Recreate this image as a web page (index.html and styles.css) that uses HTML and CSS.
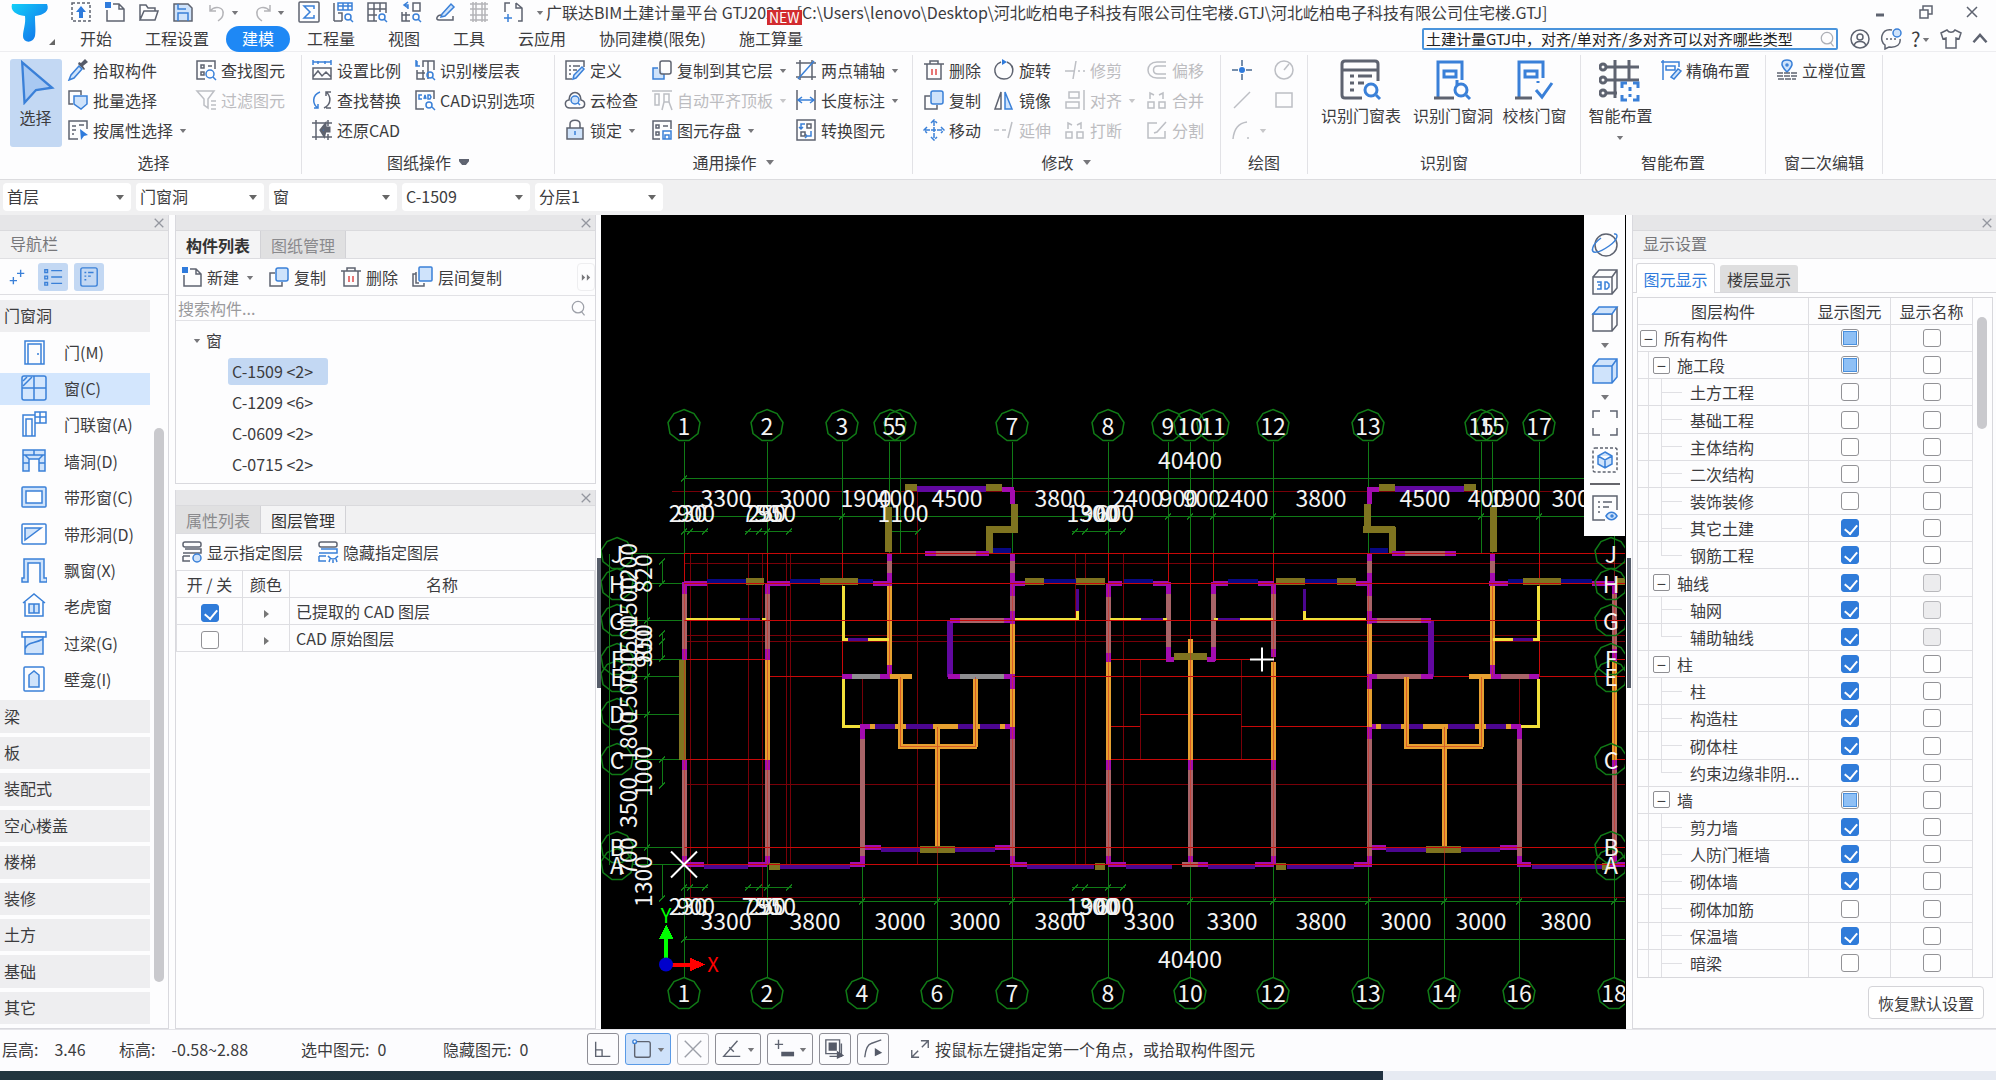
FILE: index.html
```html
<!DOCTYPE html>
<html lang="zh-CN">
<head>
<meta charset="utf-8">
<title>广联达BIM土建计量平台 GTJ2021</title>
<link rel="stylesheet" href="styles.css">
</head>
<body>
<svg class="sprite" aria-hidden="true">
  <defs>
    <linearGradient id="logo-fill" x1="0" y1="0" x2="1" y2="1"><stop offset="0" stop-color="#12d0f8"/><stop offset=".6" stop-color="#1390f0"/><stop offset="1" stop-color="#0d6ae8"/></linearGradient>
    <symbol id="up" viewBox="0 0 22 22"><rect class="g" x="2" y="2" width="18" height="18" stroke-dasharray="3 2"/><path class="bf" d="M11 5l5 6h-3v6H9v-6H6z"/></symbol>
    <symbol id="new" viewBox="0 0 22 22"><path class="g" d="M9 3h6l5 5v12H3V9M15 3v5h5"/><path class="bf" d="M1 1h6v6H1z"/></symbol>
    <symbol id="open" viewBox="0 0 22 22"><path class="g" d="M2 19V4h6l2 3h7v3M2 19l4-9h14l-3 9z"/></symbol>
    <symbol id="save" viewBox="0 0 22 22"><path class="g lf" d="M2 3h14l4 4v13H2z"/><path class="b" d="M6 20v-8h10v8M6 3v5h8"/></symbol>
    <symbol id="undo" viewBox="0 0 22 22"><path class="d" d="M4 4v6h6M4 10c5-6 14-4 13 3 0 3-2 5-5 7"/></symbol>
    <symbol id="redo" viewBox="0 0 22 22"><path class="d" d="M18 4v6h-6M18 10c-5-6-14-4-13 3 0 3 2 5 5 7"/></symbol>
    <symbol id="sigma" viewBox="0 0 22 22"><rect class="g" x="1" y="1" width="20" height="20" rx="1"/><path class="b" d="M16 8V5H6l6 6-6 6h10v-3"/></symbol>
    <symbol id="tabfind" viewBox="0 0 22 22"><path class="g" d="M2 2v18M2 20h8M6 12h4v8"/><path class="b" d="M6 2h14v7H6zM6 5h14M11 2v7M16 2v7"/><circle class="b" cx="16" cy="16" r="3"/><path class="b" d="M18 18l3 3"/></symbol>
    <symbol id="gridfind" viewBox="0 0 22 22"><path class="g" d="M11 20H2V2h18v10M2 8h18M2 14h9M8 2v18M14 2v9"/><circle class="b" cx="16" cy="16" r="3"/><path class="b" d="M18 18l3 3"/></symbol>
    <symbol id="swapfind" viewBox="0 0 22 22"><path class="b" d="M8 1L4 4l4 3M4 4h4v4"/><path class="g" d="M13 2h7v8h-7zM2 11v9h8M6 11v9M2 14h8"/><circle class="b" cx="16" cy="16" r="3"/><path class="b" d="M18 18l3 3"/></symbol>
    <symbol id="brush" viewBox="0 0 22 22"><path class="b lf" d="M8 13L17 3l3 3-9 9-4 1z"/><path class="g" d="M7 14c-4 0-6 5-2 5h14v-4"/></symbol>
    <symbol id="film" viewBox="0 0 22 22"><path class="d" d="M5 1v20M17 1v20M8 1v20M14 1v20M2 3h18M2 8h18M2 14h18M2 19h18"/></symbol>
    <symbol id="pageadd" viewBox="0 0 22 22"><path class="g" d="M3 11V2h5M14 2l6 5v13h-4M14 2v5h6"/><path class="b" d="M6 13v8M2 17h8"/></symbol>
    <symbol id="pick" viewBox="0 0 22 22"><path class="gf" d="M11 5l6 6 1-1-2-3 5-4-3-3-4 4-2-1z"/><path class="b lf" d="M12 7l-8 9-2 5 5-2 8-9z"/></symbol>
    <symbol id="batch" viewBox="0 0 22 22"><path class="g" d="M6 15H2V2h12v4"/><path class="b lf" d="M7 7h13v8l-6 5-7-5z"/></symbol>
    <symbol id="byattr" viewBox="0 0 22 22"><path class="g" d="M11 20H2V2h18v8M5 7h4M5 11h4M5 15h2M12 6h5"/><path class="bf" d="M13 10l8 6-4 1-3 4z"/></symbol>
    <symbol id="find" viewBox="0 0 22 22"><path class="g" d="M10 20H2V2h18v8M6 6h3v3H6zM6 13h3v3H6zM13 7h4"/><circle class="b" cx="15" cy="15" r="4"/><path class="b" d="M18 18l3 3"/></symbol>
    <symbol id="filter" viewBox="0 0 22 22"><path class="g" d="M2 2h17l-6 8v9l-4-3v-6zM16 12h5M16 16h5M16 20h5"/></symbol>
    <symbol id="scale" viewBox="0 0 22 22"><path class="b" d="M2 1v5M20 1v5M2 3h18M7 2v3M14 2v3"/><path class="g" d="M2 9h18v11H2zM2 18l5-6 4 5 4-4 5 5"/></symbol>
    <symbol id="replace" viewBox="0 0 22 22"><path class="b" d="M9 3C1 6 1 15 7 19M7 15v4H3"/><path class="g" d="M13 19c8-4 7-12 2-16M20 3h-5v4M15 19h5"/></symbol>
    <symbol id="restore" viewBox="0 0 22 22"><path class="g" d="M5 1v20M1 4h20M17 1v6M1 18h20M17 15v6"/><path class="bf" d="M13 16l-3-5 4-5v3h4v3h-4z"/></symbol>
    <symbol id="floor" viewBox="0 0 22 22"><path class="b" d="M2 1v6h4M3 2v5"/><path class="g" d="M9 8V2h11v9M14 2v18M3 11v9h8M9 11v9M3 14h8"/><circle class="b" cx="16" cy="16" r="3"/><path class="b" d="M18 18l3 3"/></symbol>
    <symbol id="cad" viewBox="0 0 22 22"><path class="g" d="M10 20H2V2h18v8"/><path class="b" d="M8 6H5v4h3M10 10l1-4 1 4M14 6h2l1 2-1 2h-2z"/><circle class="b" cx="15" cy="16" r="3"/><path class="b" d="M18 18l3 3"/></symbol>
    <symbol id="define" viewBox="0 0 22 22"><path class="g" d="M8 20H2V2h18v6M5 7h2M9 7h7M5 11h2M9 11h4M5 15h2"/><path class="b lf" d="M10 16l8-8 2 2-8 9-3 1z"/></symbol>
    <symbol id="cloud" viewBox="0 0 22 22"><path class="g" d="M6 19c-6 0-6-8-1-8C5 1 17 1 17 11c5 1 5 8-1 8z"/><circle class="b lf" cx="11" cy="11" r="4"/><path class="b" d="M14 14l2 2"/></symbol>
    <symbol id="lock" viewBox="0 0 22 22"><path class="g" d="M6 9V5c0-5 10-5 10 0v4"/><path class="g lf" d="M3 9h16v11H3z"/><path class="b" d="M11 12v4"/></symbol>
    <symbol id="copyfloor" viewBox="0 0 22 22"><path class="b lf" d="M7 9H2v11h11v-5"/><rect class="g" x="9" y="2" width="11" height="13" rx="2"/></symbol>
    <symbol id="autotop" viewBox="0 0 22 22"><path class="g" d="M1 2h20M4 5h4v11H4zM13 5h5v8h-5zM13 13l-2 8M18 13l3 8"/></symbol>
    <symbol id="store" viewBox="0 0 22 22"><path class="g" d="M9 20H2V2h18v8M5 6h3v3H5zM12 7h5M5 13h3v3H5z"/><path class="b" d="M12 12h8v8h-8zM14 20v-4h4v4"/></symbol>
    <symbol id="axis2" viewBox="0 0 22 22"><path class="g" d="M5 1v20M17 1v20M1 4h20M1 18h20"/><path class="b" d="M3 20L19 2"/></symbol>
    <symbol id="dim" viewBox="0 0 22 22"><path class="g" d="M2 1v20M20 1v20"/><path class="b" d="M3 11h16M7 8l-4 3 4 3M15 8l4 3-4 3"/></symbol>
    <symbol id="convert" viewBox="0 0 22 22"><rect class="g" x="2" y="1" width="18" height="20"/><path class="b" d="M10 5H6v5M16 12v5h-4M8 8l-2 2-2-2M10 15l2 2-2 2"/><path class="g" d="M12 5h4v4h-4zM6 13h4v4H6z"/></symbol>
    <symbol id="del" viewBox="0 0 22 22"><path class="g" d="M1 5h20M7 5V2h8v3M4 5v15h14V5"/><path class="r" d="M9 10v6M13 10v6"/></symbol>
    <symbol id="copy" viewBox="0 0 22 22"><path class="g" d="M7 7H2v13h12v-4"/><rect class="b lf" x="8" y="2" width="12" height="13" rx="2"/></symbol>
    <symbol id="move" viewBox="0 0 22 22"><path class="b" d="M11 2v18M2 11h18M8 4l3-3 3 3M8 18l3 3 3-3M4 8l-3 3 3 3M18 8l3 3-3 3" stroke-dasharray="5 1"/></symbol>
    <symbol id="rotate" viewBox="0 0 22 22"><path class="g" d="M14 3c9 4 7 17-3 17S-2 7 8 3"/><path class="bf" d="M9 0l5 3-5 3z"/></symbol>
    <symbol id="mirror" viewBox="0 0 22 22"><path class="g" d="M8 3v17H2z"/><path class="b lf" d="M12 3v17h7z"/></symbol>
    <symbol id="extend" viewBox="0 0 22 22"><path class="g" d="M1 11h5M9 11h4M15 19l4-16"/></symbol>
    <symbol id="trim" viewBox="0 0 22 22"><path class="g" d="M1 12h9M14 12h2M19 12h2M9 20l3-18"/></symbol>
    <symbol id="align" viewBox="0 0 22 22"><path class="g" d="M20 1v20M5 3h10v6H5zM2 13h13v6H2z"/></symbol>
    <symbol id="break" viewBox="0 0 22 22"><path class="g" d="M2 13h6v6H2zM13 13h6v6h-6zM4 10V4l4 2M17 10V4l-4 2"/></symbol>
    <symbol id="offset" viewBox="0 0 22 22"><path class="g" d="M20 3h-9c-12 0-12 16 0 16h9M20 7h-8c-6 0-6 8 0 8h8"/></symbol>
    <symbol id="split" viewBox="0 0 22 22"><path class="g" d="M11 4H2v15h17v-7M8 14l3-1 9-10"/></symbol>
    <symbol id="point" viewBox="0 0 22 22"><path class="gb" d="M11 1v6M11 15v6M1 11h6M15 11h6"/><circle class="bf" cx="11" cy="11" r="3"/></symbol>
    <symbol id="circle" viewBox="0 0 22 22"><circle class="g" cx="11" cy="11" r="9"/><path class="g" d="M11 11l5-6"/></symbol>
    <symbol id="line" viewBox="0 0 22 22"><path class="g" d="M3 19L19 3"/></symbol>
    <symbol id="rect" viewBox="0 0 22 22"><rect class="g" x="3" y="4" width="16" height="14"/></symbol>
    <symbol id="arc" viewBox="0 0 22 22"><path class="g" d="M2 20C3 10 8 4 16 3M16 19h2"/></symbol>
    <symbol id="big-table" viewBox="0 0 42 42"><path class="g2" d="M22 39H5q-3 0-3-3V5q0-3 3-3h30q3 0 3 3v17M2 11h36M10 17h4M18 17h14M10 24h4M18 24h6M10 31h4"/><circle class="b2" cx="31" cy="31" r="6"/><path class="b2" d="M36 36l4 4"/></symbol>
    <symbol id="big-hole" viewBox="0 0 42 42"><path class="b2" d="M6 38V3h24v18M12 12h12v6H12z"/><path class="g2" d="M2 39h20"/><circle class="b2" cx="29" cy="31" r="6"/><path class="b2" d="M34 36l4 4M25 21v5"/></symbol>
    <symbol id="big-check" viewBox="0 0 42 42"><path class="b2" d="M6 38V3h24v16M12 12h12v6H12zM23 31l6 7 10-14M25 22v2"/><path class="g2" d="M2 39h17"/></symbol>
    <symbol id="big-smart" viewBox="0 0 42 42"><path class="g2" d="M7 8h33M7 21h33M7 34h11M16 1v38M30 1v19"/><circle class="g2" cx="4" cy="8" r="3"/><circle class="g2" cx="4" cy="21" r="3"/><circle class="g2" cx="4" cy="34" r="3"/><path class="b2" d="M23 29v-5h5M34 24h5v5M39 36v5h-5M28 41h-5v-5M31 28v4M31 35v3"/></symbol>
    <symbol id="precise" viewBox="0 0 22 22"><path class="b" d="M3 1v20M1 3h18v5M6 7h9v4H6z"/><path class="b lf" d="M11 18l7-8 3 2-7 8z"/></symbol>
    <symbol id="stand" viewBox="0 0 22 22"><path class="b lf" d="M11 13C2 4 7 1 11 1s9 3 0 12z"/><circle class="b" cx="11" cy="6" r="1"/><path class="g" d="M1 14h20M1 17h20M2 20h18" stroke-dasharray="6 1"/></symbol>
    <symbol id="search" viewBox="0 0 22 22"><circle class="g" cx="11" cy="10" r="7"/><path class="g" d="M15 15l4 5"/></symbol>
    <symbol id="user" viewBox="0 0 22 22"><circle class="g" cx="11" cy="11" r="9"/><circle class="g" cx="11" cy="9" r="3"/><path class="g" d="M5 18c1-6 11-6 12 0"/></symbol>
    <symbol id="chat" viewBox="0 0 22 22"><path class="g" d="M12 2C1 0-1 13 5 17v4l4-2c8 1 12-3 11-8M6 11h2M10 11h2M14 11h2"/><circle class="b lf" cx="17" cy="5" r="4"/></symbol>
    <symbol id="shirt" viewBox="0 0 22 22"><path class="g" d="M7 2L1 5l2 6 3-1v10h10V10l3 1 2-6-6-3c-2 3-6 3-8 0z"/></symbol>
    <symbol id="chev" viewBox="0 0 22 22"><path class="g2" d="M3 15l8-9 8 9"/></symbol>
    <symbol id="spark" viewBox="0 0 22 22"><path class="b" d="M15 3v8M11 7h8M7 11v8M3 15h8"/></symbol>
    <symbol id="list" viewBox="0 0 22 22"><path class="b" d="M2 3h3v3H2zM2 10h3v3H2zM2 17h3v3H2zM9 4h12M9 11h12M9 18h12"/></symbol>
    <symbol id="card" viewBox="0 0 22 22"><rect class="b" x="2" y="1" width="18" height="20" rx="2"/><path class="b" d="M6 6h2M10 6h6M6 10h2M10 10h3M6 14h2"/></symbol>
    <symbol id="door" viewBox="0 0 26 26"><rect class="b" x="4" y="2" width="19" height="23"/><path class="b" d="M7 25V5h13v20M16 15h2"/></symbol>
    <symbol id="window" viewBox="0 0 26 26"><rect class="b" x="1" y="1" width="24" height="24" rx="2"/><path class="b" d="M13 1v24M1 13h24M2 11l9-9M2 6l4-4"/></symbol>
    <symbol id="doorwin" viewBox="0 0 26 26"><path class="b" d="M2 25V4h12v21zM5 25V8h6v17M14 1h11v11H14zM19 1v11M14 6h11"/></symbol>
    <symbol id="wallhole" viewBox="0 0 26 26"><path class="b lf" d="M2 2h22v21h-6V11H8v12H2zM2 7h22M13 2v5M2 15h6M18 15h6M8 11l-4-4M18 11l4-4"/></symbol>
    <symbol id="strip" viewBox="0 0 26 26"><rect class="b lf" x="1" y="3" width="24" height="20" rx="1"/><rect class="b wf" x="5" y="7" width="16" height="12"/></symbol>
    <symbol id="striphole" viewBox="0 0 26 26"><rect class="b" x="1" y="3" width="24" height="20" rx="1"/><path class="b lf" d="M4 19V7h16z"/></symbol>
    <symbol id="bay" viewBox="0 0 26 26"><path class="b lf" d="M3 21V2h20v19h3v4h-7V6H7v19H1v-4z"/></symbol>
    <symbol id="dormer" viewBox="0 0 26 26"><path class="b" d="M2 10L13 1l11 9M4 9v14h18V9"/><path class="b lf" d="M8 11h10v9H8zM13 11v9"/></symbol>
    <symbol id="lintel" viewBox="0 0 26 26"><path class="b" d="M1 2h24v5H1z"/><path class="b lf" d="M4 7h18v17H4zM4 19C6 12 13 14 22 9"/></symbol>
    <symbol id="niche" viewBox="0 0 26 26"><rect class="b" x="3" y="1" width="20" height="24" rx="1"/><path class="b lf" d="M8 21V9l5-4 5 4v12z"/></symbol>
    <symbol id="floorcopy" viewBox="0 0 22 22"><path class="g" d="M4 8H1v12h11v-3M7 17H4V6"/><rect class="b lf" x="7" y="1" width="13" height="14" rx="1"/></symbol>
    <symbol id="layers" viewBox="0 0 22 22"><rect class="g" x="2" y="1" width="18" height="5" rx="2"/><path class="g" d="M4 8h16v4H2M2 15h7M2 15v5h7"/><circle class="b lf" cx="16" cy="17" r="4"/></symbol>
    <symbol id="layershide" viewBox="0 0 22 22"><rect class="g" x="2" y="1" width="18" height="5" rx="2"/><path class="b" d="M4 8h16v4H2M2 15h7M2 15v5h7M11 15c3 4 7 4 10 0M13 18l-1 3M19 18l1 3M16 19v3"/></symbol>
    <symbol id="globe" viewBox="0 0 28 28"><circle class="g" cx="15" cy="14" r="11"/><path class="b" d="M23 3c5-1 4 6-5 12C8 22-1 24 2 16c1-3 4-6 8-9"/></symbol>
    <symbol id="cube3d" viewBox="0 0 28 28"><path class="g" d="M2 9h19v17H2zM2 9l6-7h18v18l-5 6M21 9l5-7"/><path class="b" d="M6 14h4v3H7h3v4H6M14 14h2l2 2v3l-2 2h-2z"/></symbol>
    <symbol id="cubetop" viewBox="0 0 28 28"><path class="g" d="M2 9h19v17H2zM21 26l5-6V2"/><path class="b lf" d="M2 9l6-7h18l-5 7z"/></symbol>
    <symbol id="cubeblue" viewBox="0 0 28 28"><path class="b lf" d="M2 9l6-7h18v18l-5 6H2zM2 9h19v17M21 9l5-7"/></symbol>
    <symbol id="corners" viewBox="0 0 28 28"><path class="g" d="M2 9V2h7M19 2h7v7M26 19v7h-7M9 26H2v-7"/></symbol>
    <symbol id="cubesel" viewBox="0 0 28 28"><rect class="g" x="2" y="2" width="24" height="24" rx="2" stroke-dasharray="3 2"/><path class="b lf" d="M14 6l7 4v8l-7 4-7-4v-8zM7 10l7 4 7-4M14 14v8"/></symbol>
    <symbol id="listeye" viewBox="0 0 28 28"><path class="g" d="M14 26H2V2h24v14M7 8h2M12 8h9M7 13h2M12 13h6M7 18h2"/><path class="b lf" d="M15 22c3-5 8-5 11 0-3 5-8 5-11 0z"/><circle class="b" cx="21" cy="22" r="1"/></symbol>
    <symbol id="s-ortho" viewBox="0 0 24 24"><path class="g" d="M4 4v16h16M4 13h7v7"/></symbol>
    <symbol id="s-rect" viewBox="0 0 24 24"><rect class="g" x="4" y="4" width="17" height="17" rx="2"/><circle class="b wf" cx="4" cy="4" r="2"/></symbol>
    <symbol id="s-x" viewBox="0 0 24 24"><path class="g" d="M3 3l18 18M21 3L3 21"/></symbol>
    <symbol id="s-angle" viewBox="0 0 24 24"><path class="g" d="M18 3L3 20h18M9 10l5 5"/></symbol>
    <symbol id="s-plus" viewBox="0 0 24 24"><path class="g" d="M2 7h9M6 2v10"/><path class="gf" d="M9 15h14v5H9z"/></symbol>
    <symbol id="s-copy" viewBox="0 0 24 24"><path class="g" d="M2 2h15v15H2zM6 20h13V6"/><path class="gf" d="M5 5h9v9H5zM14 14l8 5-8 4z"/></symbol>
    <symbol id="s-arc" viewBox="0 0 24 24"><path class="g" d="M3 21C4 12 6 7 10 6l11-4"/><path class="gf" d="M14 11l8 5-8 4z"/></symbol>
    <symbol id="s-expand" viewBox="0 0 24 24"><path class="g" d="M3 21l7-7M14 10l7-7M13 3h8v8M3 13v8h8"/></symbol>
    <symbol id="close" viewBox="0 0 14 14"><path class="g" d="M2 2l10 10M12 2L2 12"/></symbol>
    <symbol id="winrest" viewBox="0 0 14 14"><path class="g" d="M1 5h8v8H1zM4 5V1h9v8H9"/></symbol>
    <symbol id="winmin" viewBox="0 0 14 14"><path class="g2" d="M3 10h8"/></symbol>
    <symbol id="arrow" viewBox="0 0 10 6"><path class="af" d="M1 1h8L5 6z"/></symbol>
    <polygon id="bub" points="0,-16 10,-12 16,-3 14,8 5,15 -5,15 -14,8 -16,-3 -10,-12"/>
  </defs>
</svg>

<header class="top">
  <button class="logo" aria-label="应用菜单"><svg viewBox="0 0 60 52"><path fill="url(#logo-fill)" d="M12 4h35c3 7-3 11-12 12 0 9 1 14 0 20-2 8-12 7-12 0 0-6 3-12 2-20C16 15 10 11 12 4z"/><path fill="#666" d="M55 39v6h-6z"/></svg></button>
  <div class="top-rows">
    <div class="titlebar">
      <div class="qat">
        <button aria-label="上传"><svg class="ic"><use href="#up"/></svg></button>
        <button aria-label="新建"><svg class="ic"><use href="#new"/></svg></button>
        <button aria-label="打开"><svg class="ic"><use href="#open"/></svg></button>
        <button aria-label="保存"><svg class="ic"><use href="#save"/></svg></button>
        <button aria-label="撤销" class="split"><svg class="ic"><use href="#undo"/></svg><svg class="ar"><use href="#arrow"/></svg></button>
        <button aria-label="恢复" class="split"><svg class="ic"><use href="#redo"/></svg><svg class="ar"><use href="#arrow"/></svg></button>
        <button aria-label="汇总"><svg class="ic"><use href="#sigma"/></svg></button>
        <button aria-label="查看报表"><svg class="ic"><use href="#tabfind"/></svg></button>
        <button aria-label="查看工程量"><svg class="ic"><use href="#gridfind"/></svg></button>
        <button aria-label="查看计算式"><svg class="ic"><use href="#swapfind"/></svg></button>
        <button aria-label="格式刷"><svg class="ic"><use href="#brush"/></svg></button>
        <button aria-label="视频"><svg class="ic"><use href="#film"/></svg></button>
        <button aria-label="添加"><svg class="ic"><use href="#pageadd"/></svg></button>
        <button aria-label="更多"><svg class="ar"><use href="#arrow"/></svg></button>
      </div>
      <div class="title">广联达BIM土建计量平台 GTJ2021 - [C:\Users\lenovo\Desktop\河北屹柏电子科技有限公司住宅楼.GTJ\河北屹柏电子科技有限公司住宅楼.GTJ]<span class="badge">NEW</span></div>
      <div class="wins">
        <button aria-label="最小化"><svg class="xs"><use href="#winmin"/></svg></button>
        <button aria-label="还原"><svg class="xs"><use href="#winrest"/></svg></button>
        <button aria-label="关闭"><svg class="xs"><use href="#close"/></svg></button>
      </div>
    </div>
    <div class="tabbar">
      <nav class="tabs"><a href="#">开始</a><a href="#">工程设置</a><a href="#" class="on">建模</a><a href="#">工程量</a><a href="#">视图</a><a href="#">工具</a><a href="#">云应用</a><a href="#">协同建模(限免)</a><a href="#">施工算量</a></nav>
      <div class="help">
        <label class="ask"><input type="text" aria-label="搜索帮助" value="土建计量GTJ中，对齐/单对齐/多对齐可以对齐哪些类型"><svg class="sm"><use href="#search"/></svg></label>
        <button aria-label="用户"><svg class="ic"><use href="#user"/></svg></button>
        <button aria-label="消息"><svg class="ic"><use href="#chat"/></svg></button>
        <button class="q">?<svg class="ar"><use href="#arrow"/></svg></button>
        <button aria-label="皮肤"><svg class="ic"><use href="#shirt"/></svg></button>
        <button aria-label="收起"><svg class="sm"><use href="#chev"/></svg></button>
      </div>
    </div>
  </div>
</header>

<section class="ribbon">
  <div class="group g1"><div class="cells">
    <button class="big on"><svg viewBox="0 0 36 40"><path class="b2 lf2" d="M6 3l26 22-14 2-10 11z"/></svg>选择</button>
    <button><svg class="ic"><use href="#pick"/></svg>拾取构件</button>
    <button><svg class="ic"><use href="#find"/></svg>查找图元</button>
    <button><svg class="ic"><use href="#batch"/></svg>批量选择</button>
    <button disabled><svg class="ic"><use href="#filter"/></svg>过滤图元</button>
    <button><svg class="ic"><use href="#byattr"/></svg>按属性选择<svg class="ar"><use href="#arrow"/></svg></button>
  </div><p>选择</p></div>
  <div class="group g2"><div class="cells">
    <button><svg class="ic"><use href="#scale"/></svg>设置比例</button>
    <button><svg class="ic"><use href="#floor"/></svg>识别楼层表</button>
    <button><svg class="ic"><use href="#replace"/></svg>查找替换</button>
    <button><svg class="ic"><use href="#cad"/></svg>CAD识别选项</button>
    <button><svg class="ic"><use href="#restore"/></svg>还原CAD</button>
  </div><p>图纸操作<svg class="ar"><use href="#arrow"/></svg></p></div>
  <div class="group g3"><div class="cells">
    <button><svg class="ic"><use href="#define"/></svg>定义</button>
    <button><svg class="ic"><use href="#copyfloor"/></svg>复制到其它层<svg class="ar"><use href="#arrow"/></svg></button>
    <button><svg class="ic"><use href="#axis2"/></svg>两点辅轴<svg class="ar"><use href="#arrow"/></svg></button>
    <button><svg class="ic"><use href="#cloud"/></svg>云检查</button>
    <button disabled><svg class="ic"><use href="#autotop"/></svg>自动平齐顶板<svg class="ar"><use href="#arrow"/></svg></button>
    <button><svg class="ic"><use href="#dim"/></svg>长度标注<svg class="ar"><use href="#arrow"/></svg></button>
    <button><svg class="ic"><use href="#lock"/></svg>锁定<svg class="ar"><use href="#arrow"/></svg></button>
    <button><svg class="ic"><use href="#store"/></svg>图元存盘<svg class="ar"><use href="#arrow"/></svg></button>
    <button><svg class="ic"><use href="#convert"/></svg>转换图元</button>
  </div><p>通用操作<svg class="ar"><use href="#arrow"/></svg></p></div>
  <div class="group g4"><div class="cells">
    <button><svg class="ic"><use href="#del"/></svg>删除</button>
    <button><svg class="ic"><use href="#rotate"/></svg>旋转</button>
    <button disabled><svg class="ic"><use href="#trim"/></svg>修剪</button>
    <button disabled><svg class="ic"><use href="#offset"/></svg>偏移</button>
    <button><svg class="ic"><use href="#copy"/></svg>复制</button>
    <button><svg class="ic"><use href="#mirror"/></svg>镜像</button>
    <button disabled><svg class="ic"><use href="#align"/></svg>对齐<svg class="ar"><use href="#arrow"/></svg></button>
    <button disabled><svg class="ic"><use href="#break"/></svg>合并</button>
    <button><svg class="ic"><use href="#move"/></svg>移动</button>
    <button disabled><svg class="ic"><use href="#extend"/></svg>延伸</button>
    <button disabled><svg class="ic"><use href="#break"/></svg>打断</button>
    <button disabled><svg class="ic"><use href="#split"/></svg>分割</button>
  </div><p>修改<svg class="ar"><use href="#arrow"/></svg></p></div>
  <div class="group g5"><div class="cells">
    <button aria-label="点"><svg class="ic"><use href="#point"/></svg></button>
    <button disabled aria-label="圆"><svg class="ic"><use href="#circle"/></svg></button>
    <button disabled aria-label="直线"><svg class="ic"><use href="#line"/></svg></button>
    <button disabled aria-label="矩形"><svg class="ic"><use href="#rect"/></svg></button>
    <button disabled aria-label="弧"><svg class="ic"><use href="#arc"/></svg><svg class="ar"><use href="#arrow"/></svg></button>
  </div><p>绘图</p></div>
  <div class="group g6"><div class="cells">
    <button class="big"><svg><use href="#big-table"/></svg>识别门窗表</button>
    <button class="big"><svg><use href="#big-hole"/></svg>识别门窗洞</button>
    <button class="big"><svg><use href="#big-check"/></svg>校核门窗</button>
  </div><p>识别窗</p></div>
  <div class="group g7"><div class="cells">
    <button class="big"><svg><use href="#big-smart"/></svg>智能布置<svg class="ar"><use href="#arrow"/></svg></button>
    <button><svg class="ic"><use href="#precise"/></svg>精确布置</button>
  </div><p>智能布置</p></div>
  <div class="group g8"><div class="cells">
    <button><svg class="ic"><use href="#stand"/></svg>立樘位置</button>
  </div><p>窗二次编辑</p></div>
</section>

<div class="pickers">
  <label><select aria-label="楼层"><option>首层</option></select></label>
  <label><select aria-label="类别"><option>门窗洞</option></select></label>
  <label><select aria-label="构件类型"><option>窗</option></select></label>
  <label><select aria-label="构件"><option>C-1509</option></select></label>
  <label><select aria-label="分层"><option>分层1</option></select></label>
</div>

<main>
  <aside class="panel nav">
    <div class="strip"><button aria-label="关闭导航栏"><svg class="xs"><use href="#close"/></svg></button></div>
    <h2>导航栏</h2>
    <div class="navtools">
      <button aria-label="常用"><svg class="ic"><use href="#spark"/></svg></button>
      <button class="on" aria-label="列表"><svg class="ic"><use href="#list"/></svg></button>
      <button class="on" aria-label="卡片"><svg class="ic"><use href="#card"/></svg></button>
    </div>
    <div class="navscroll">
      <div class="navlist">
        <button class="cat">门窗洞</button>
        <button><svg><use href="#door"/></svg>门(M)</button>
        <button class="on"><svg><use href="#window"/></svg>窗(C)</button>
        <button><svg><use href="#doorwin"/></svg>门联窗(A)</button>
        <button><svg><use href="#wallhole"/></svg>墙洞(D)</button>
        <button><svg><use href="#strip"/></svg>带形窗(C)</button>
        <button><svg><use href="#striphole"/></svg>带形洞(D)</button>
        <button><svg><use href="#bay"/></svg>飘窗(X)</button>
        <button><svg><use href="#dormer"/></svg>老虎窗</button>
        <button><svg><use href="#lintel"/></svg>过梁(G)</button>
        <button><svg><use href="#niche"/></svg>壁龛(I)</button>
        <button class="cat">梁</button>
        <button class="cat">板</button>
        <button class="cat">装配式</button>
        <button class="cat">空心楼盖</button>
        <button class="cat">楼梯</button>
        <button class="cat">装修</button>
        <button class="cat">土方</button>
        <button class="cat">基础</button>
        <button class="cat">其它</button>
      </div>
      <div class="track"><div class="thumb"></div></div>
    </div>
  </aside>

  <div class="mid">
    <section class="panel comps">
      <div class="strip"><button aria-label="关闭构件列表"><svg class="xs"><use href="#close"/></svg></button></div>
      <div class="ptabs"><button class="on bold">构件列表</button><button>图纸管理</button></div>
      <div class="ptools">
        <button><svg class="ic"><use href="#new"/></svg>新建<svg class="ar"><use href="#arrow"/></svg></button>
        <button><svg class="ic"><use href="#copy"/></svg>复制</button>
        <button><svg class="ic"><use href="#del"/></svg>删除</button>
        <button><svg class="ic"><use href="#floorcopy"/></svg>层间复制</button>
        <button class="more" aria-label="更多工具"><svg viewBox="0 0 12 8"><path class="af" d="M1 0l4 4-4 4zM7 0l4 4-4 4z"/></svg></button>
      </div>
      <label class="psearch"><input type="text" aria-label="搜索构件" placeholder="搜索构件..."><svg class="sm"><use href="#search"/></svg></label>
      <ul class="tree">
        <li><svg class="ar"><use href="#arrow"/></svg>窗
          <ul><li><span class="on">C-1509 &lt;2&gt;</span></li><li><span>C-1209 &lt;6&gt;</span></li><li><span>C-0609 &lt;2&gt;</span></li><li><span>C-0715 &lt;2&gt;</span></li></ul>
        </li>
      </ul>
    </section>
    <section class="panel layers">
      <div class="strip"><button aria-label="关闭图层管理"><svg class="xs"><use href="#close"/></svg></button></div>
      <div class="ptabs"><button>属性列表</button><button class="on">图层管理</button></div>
      <div class="ptools">
        <button><svg class="ic"><use href="#layers"/></svg>显示指定图层</button>
        <button><svg class="ic"><use href="#layershide"/></svg>隐藏指定图层</button>
      </div>
      <table class="ltable">
        <thead><tr><th>开 / 关</th><th>颜色</th><th>名称</th></tr></thead>
        <tbody>
          <tr><td><input type="checkbox" checked aria-label="已提取的 CAD 图层"></td><td><i class="tri"></i></td><td>已提取的 CAD 图层</td></tr>
          <tr><td><input type="checkbox" aria-label="CAD 原始图层"></td><td><i class="tri"></i></td><td>CAD 原始图层</td></tr>
        </tbody>
      </table>
    </section>
  </div>

  <div class="grip"></div>

  <section class="canvas">
    <svg class="plan" viewBox="601 216 1024 815" preserveAspectRatio="xMidYMid slice" role="img" aria-label="首层平面图">
      <g class="dimred">
        <path d="M672 493H1626M684 565H1626M684 637H1626M684 643H1626M684 786H1626M684 899H1626"/>
        <path d="M690 555V899M707 555V866M748 555V866M762 555V899M786 555V866M790 555V866M917 493V866M1075 555V866M1085 555V866M1123 555V866M1140 661V761M1241 661V761M862 678V728M1519 678V728"/>
      </g>
      <path class="green" d="M684 443V555M767 443V555M842 443V555M889 443V555M900 443V555M1012 443V555M1108 443V555M1168 443V555M1190 443V555M1213 443V555M1273 443V555M1368 443V555M1481 443V555M1492 443V555M1539 443V555M1614 480V555
        M684 866V979M767 866V979M862 866V979M937 866V979M1012 866V979M1108 866V979M1190 866V979M1273 866V979M1368 866V979M1444 866V979M1519 866V979M1614 866V979
        M684 480H1626M684 518H1626M684 903H1626M684 941H1626M684 533H708M745 533H792M889 533H918M1072 533H1125M684 889H708M745 889H792M1072 889H1125
        M609 555V866M647 555V866M662 563V585M662 635V660M662 761V787M662 866V900M633 555H684M633 585H684M633 622H684M633 661H684M633 678H684M633 716H684M633 761H684M633 849H684M633 866H684"/>
      <path class="green" d="M681 483l6-6M681 536l6-6M687 536l6-6M702 536l6-6M745 536l6-6M756 536l6-6M764 536l6-6M786 536l6-6M839 521l6-6M886 521l6-6M915 536l6-6M1072 536l6-6M1082 536l6-6M1105 536l6-6M1120 536l6-6M1165 521l6-6M1187 521l6-6M1210 521l6-6M1270 521l6-6M1365 521l6-6M1478 521l6-6M1536 521l6-6M681 892l6-6M687 892l6-6M702 892l6-6M745 892l6-6M756 892l6-6M764 892l6-6M786 892l6-6M859 906l6-6M934 906l6-6M1009 906l6-6M1072 892l6-6M1082 892l6-6M1105 892l6-6M1120 892l6-6M1187 906l6-6M1270 906l6-6M1365 906l6-6M1441 906l6-6M1516 906l6-6M1611 906l6-6M681 944l6-6M644 588l6-6M644 625l6-6M644 681l6-6M644 719l6-6M644 852l6-6M659 566l6-6M659 588l6-6M659 638l6-6M659 646l6-6M659 663l6-6M659 764l6-6M659 790l6-6M659 903l6-6"/>
      <g class="green">
        <use href="#bub" x="684" y="427"/><use href="#bub" x="767" y="427"/><use href="#bub" x="842" y="427"/><use href="#bub" x="890" y="427"/><use href="#bub" x="900" y="427"/><use href="#bub" x="1012" y="427"/><use href="#bub" x="1108" y="427"/><use href="#bub" x="1168" y="427"/><use href="#bub" x="1190" y="427"/><use href="#bub" x="1213" y="427"/><use href="#bub" x="1273" y="427"/><use href="#bub" x="1368" y="427"/><use href="#bub" x="1481" y="427"/><use href="#bub" x="1492" y="427"/><use href="#bub" x="1539" y="427"/>
        <use href="#bub" x="684" y="995"/><use href="#bub" x="767" y="995"/><use href="#bub" x="862" y="995"/><use href="#bub" x="937" y="995"/><use href="#bub" x="1012" y="995"/><use href="#bub" x="1108" y="995"/><use href="#bub" x="1190" y="995"/><use href="#bub" x="1273" y="995"/><use href="#bub" x="1368" y="995"/><use href="#bub" x="1444" y="995"/><use href="#bub" x="1519" y="995"/><use href="#bub" x="1614" y="995"/>
        <use href="#bub" x="617" y="555"/><use href="#bub" x="617" y="586"/><use href="#bub" x="617" y="622"/><use href="#bub" x="617" y="661"/><use href="#bub" x="617" y="678"/><use href="#bub" x="617" y="716"/><use href="#bub" x="617" y="761"/><use href="#bub" x="617" y="849"/><use href="#bub" x="617" y="866"/>
      </g>
      <path class="red" d="M684 661H767M767 678H792M1108 661H1273M684 761H767M1108 761H1273M1108 728H1140M1241 728H1368M1140 716H1241M1433 678H1626M1614 661H1626M1614 761H1626M684 555V585M767 555V585M842 555V678M1108 555V585M1168 555V585M1190 555V640M1213 555V585M1273 555V585M1539 555V678"/>
      <!-- outer walls and the stair core -->
      <g class="wall">
        <path class="w-purple" d="M684 583V595M684 650V661M684 761V771M684 857V868M767 585V595M767 650V661M767 761V771M767 857V866M684 585H707M767 585H790M1108 585H1122M1153 585H1168M1213 585H1228M1258 585H1274M1592 585H1614M684 866H704M748 866H767M1108 866H1126M1198 866H1208M1255 866H1274M1608 866H1626M1108 585V598M1108 654V663M1108 761V771M1108 857V866M1168 583V595M1168 648V662M1213 583V595M1213 648V662M1166 661H1174M1207 661H1215M1190 761V771M1190 857V866M1273 585V595M1273 650V658M1273 761V771M1273 857V866M1614 585V595M1614 650V662M1614 761V771M1614 857V866"/>
        <path class="w-tan" d="M684 595V650M684 771V857M767 595V650M767 771V857M1108 598V654M1108 771V857M1168 595V648M1213 595V648M1190 771V857M1273 595V650M1273 771V857M1614 595V650M1614 771V857M1182 866H1198"/>
        <path class="w-orange" d="M767 661V761M1108 663V761M1190 640V761M1273 663V761M1614 662V761"/>
        <path class="w-yellow" d="M686 621H740M762 621H766M1110 621H1141M1163 621H1167M1214 621H1218M1240 621H1273"/>
        <path class="w-dark thin" d="M740 621H760M1141 621H1163M1218 621H1240"/>
        <path class="w-navy" d="M707 583H746M790 583H820M1124 583H1153M1228 583H1258M1560 583H1592"/>
        <path class="w-olive" d="M682 661V761M746 583H764M769 868H780M1174 658H1207M1616 583H1626M1602 868H1610"/>
        <path class="w-dark" d="M704 868H748M780 868H850M1126 868H1172M1208 868H1255M1532 868H1602"/>
      </g>
      <!-- one dwelling wing; its twin is the mirror image about axis 10 -->
      <g class="wall" id="wing">
        <path class="w-olive" d="M888 508V553M905 489H917M986 489H1002M1014 505V534M986 531H1018M989 528V555M820 583H858M1025 583H1044M1076 583H1105M920 851H955M1095 868H1105"/>
        <path class="w-navy" d="M858 583H873M1044 583H1076M993 552H1011"/>
        <path class="w-dark" d="M881 851H920M955 851H995M1027 868H1094M875 728H895M906 728H933M958 728H973M980 728H1000"/>
        <path class="w-dark thin" d="M848 641H868M1077 590V612"/>
        <path class="w-violet" d="M917 490H986M950 622V678"/>
        <path class="w-purple" d="M1002 491H1014M1012 491V505M889 555V562M889 574V587M873 585H892M925 555H936M976 555H989M1012 555V562M1012 574V597M1012 612V625M1012 675V690M1012 728V740M1012 857V868M1012 585H1025M950 622H960M1004 622H1014M948 678H960M1004 678H1014M889 666V678M842 678H852M880 678H892M860 728H870M1005 728H1014M862 728V740M862 857V868M862 849H881M995 849H1012M850 866H864M1012 866H1027"/>
        <path class="w-tan" d="M889 562V574M936 555H976M1012 562V574M1012 597V612M1012 740V857M960 622H1004M862 740V857M852 678H880M960 678H1004"/>
        <path class="w-orange" d="M889 587V666M1012 625V675M1012 690V728M870 728H875M895 728H906M933 728H958M973 728H980M1000 728H1005M900 678V748M975 678V748M898 748H977M937 728V847M890 678H912"/>
        <path class="w-yellow" d="M843 587V641H848M868 641H889M843 680V728H860M1015 621H1077V612"/>
      </g>
      <use href="#wing" transform="translate(2381 0) scale(-1 1)"/>
      <g class="wall"><path class="w-grey" d="M852 678H880M960 678H1004"/></g>
      <path class="red" d="M684 555H1626M684 585H1626M684 622H1626M792 678H842M1012 678H1368M684 849H1626M684 866H1626"/>
      <path class="core" d="M684 585V866M767 585V866M889 585V678M1012 585V866M1108 585V866M1190 640V866M1273 585V866M1368 585V866M1492 585V678M1614 555V866M937 728V866M1444 728V866M900 678V748M975 678V748M1406 678V748M1481 678V748M900 748H975M1406 748H1481"/>
      <g class="green"><use href="#bub" x="1611" y="555"/><use href="#bub" x="1611" y="586"/><use href="#bub" x="1611" y="622"/><use href="#bub" x="1611" y="661"/><use href="#bub" x="1611" y="678"/><use href="#bub" x="1611" y="761"/><use href="#bub" x="1611" y="849"/><use href="#bub" x="1611" y="866"/></g>
      <g class="ax">
        <text x="684" y="436">1</text><text x="767" y="436">2</text><text x="842" y="436">3</text><text x="889" y="436">5</text><text x="900" y="436">5</text><text x="1012" y="436">7</text><text x="1108" y="436">8</text><text x="1168" y="436">9</text><text x="1190" y="436">10</text><text x="1213" y="436">11</text><text x="1273" y="436">12</text><text x="1368" y="436">13</text><text x="1481" y="436">15</text><text x="1492" y="436">15</text><text x="1539" y="436">17</text>
        <text x="684" y="1003">1</text><text x="767" y="1003">2</text><text x="862" y="1003">4</text><text x="937" y="1003">6</text><text x="1012" y="1003">7</text><text x="1108" y="1003">8</text><text x="1190" y="1003">10</text><text x="1273" y="1003">12</text><text x="1368" y="1003">13</text><text x="1444" y="1003">14</text><text x="1519" y="1003">16</text><text x="1614" y="1003">18</text>
        <text x="617" y="564">J</text><text x="617" y="594">H</text><text x="617" y="631">G</text><text x="617" y="669">F</text><text x="617" y="687">E</text><text x="617" y="724">D</text><text x="617" y="770">C</text><text x="617" y="857">B</text><text x="617" y="875">A</text>
        <text x="1611" y="564">J</text><text x="1611" y="594">H</text><text x="1611" y="631">G</text><text x="1611" y="669">F</text><text x="1611" y="687">E</text><text x="1611" y="770">C</text><text x="1611" y="857">B</text><text x="1611" y="875">A</text>
      </g>
      <g class="dm">
        <text x="1190" y="470">40400</text><text x="1190" y="969">40400</text>
        <text x="726" y="508">3300</text><text x="805" y="508">3000</text><text x="866" y="508">1900</text><text x="896" y="508">400</text><text x="957" y="508">4500</text><text x="1060" y="508">3800</text><text x="1138" y="508">2400</text><text x="1179" y="508">900</text><text x="1202" y="508">900</text><text x="1243" y="508">2400</text><text x="1321" y="508">3800</text><text x="1425" y="508">4500</text><text x="1487" y="508">400</text><text x="1515" y="508">1900</text><text x="1577" y="508">3000</text>
        <text x="688" y="523">230</text><text x="696" y="523">900</text><text x="761" y="523">750</text><text x="767" y="523">250</text><text x="777" y="523">950</text><text x="903" y="523">1100</text><text x="1092" y="523">1300</text><text x="1100" y="523">900</text><text x="1115" y="523">600</text>
        <text x="688" y="916">230</text><text x="696" y="916">900</text><text x="761" y="916">750</text><text x="767" y="916">250</text><text x="777" y="916">950</text><text x="1092" y="916">1300</text><text x="1100" y="916">900</text><text x="1115" y="916">600</text>
        <text x="726" y="931">3300</text><text x="815" y="931">3800</text><text x="900" y="931">3000</text><text x="975" y="931">3000</text><text x="1060" y="931">3800</text><text x="1149" y="931">3300</text><text x="1232" y="931">3300</text><text x="1321" y="931">3800</text><text x="1406" y="931">3000</text><text x="1481" y="931">3000</text><text x="1566" y="931">3800</text>
        <text transform="translate(637 570) rotate(-90)">1200</text><text transform="translate(637 604) rotate(-90)">1500</text><text transform="translate(637 642) rotate(-90)">1500</text><text transform="translate(637 670) rotate(-90)">700</text><text transform="translate(637 697) rotate(-90)">1500</text><text transform="translate(637 738) rotate(-90)">1800</text><text transform="translate(637 804) rotate(-90)">3500</text><text transform="translate(637 858) rotate(-90)">700</text>
        <text transform="translate(652 575) rotate(-90)">820</text><text transform="translate(652 645) rotate(-90)">850</text><text transform="translate(652 650) rotate(-90)">900</text><text transform="translate(652 773) rotate(-90)">1000</text><text transform="translate(652 883) rotate(-90)">1300</text>
      </g>
      <path class="mark" d="M671 853l26 26M697 853l-26 26"/>
      <path class="mark" d="M1250 661h24M1262 649v24"/>
      <g class="ucs"><path fill="#0f0" d="M664 960v-20h-5l7-14 7 14h-5v20z"/><path fill="#f00" d="M672 964h18v-5l15 7-15 7v-5h-18z"/><circle cx="666" cy="966" r="7" fill="#00c"/><text x="666" y="924" fill="#0f0">Y</text><text x="713" y="973" fill="#f00">X</text></g>
    </svg>
    <div class="viewbar">
      <button aria-label="动态观察"><svg><use href="#globe"/></svg></button>
      <button aria-label="三维"><svg><use href="#cube3d"/></svg></button>
      <button aria-label="俯视"><svg><use href="#cubetop"/></svg><svg class="ar"><use href="#arrow"/></svg></button>
      <button aria-label="着色"><svg><use href="#cubeblue"/></svg><svg class="ar"><use href="#arrow"/></svg></button>
      <button aria-label="全屏"><svg><use href="#corners"/></svg></button>
      <button aria-label="选择显示"><svg><use href="#cubesel"/></svg></button>
      <hr>
      <button aria-label="显示设置"><svg><use href="#listeye"/></svg></button>
    </div>
  </section>

  <div class="grip"></div>

  <aside class="panel display">
    <div class="strip"><button aria-label="关闭显示设置"><svg class="xs"><use href="#close"/></svg></button></div>
    <h2>显示设置</h2>
    <div class="dtabs"><button class="on">图元显示</button><button>楼层显示</button></div>
    <div class="dbody">
      <table class="dtable">
        <thead><tr><th>图层构件</th><th>显示图元</th><th>显示名称</th></tr></thead>
        <tbody>
          <tr class="l0"><td><button class="tog">−</button>所有构件</td><td><input type="checkbox" class="part" aria-label="显示所有构件"></td><td><input type="checkbox" aria-label="所有构件名称"></td></tr>
          <tr class="l1"><td><button class="tog">−</button>施工段</td><td><input type="checkbox" class="part" aria-label="显示施工段"></td><td><input type="checkbox" aria-label="施工段名称"></td></tr>
          <tr class="l2"><td>土方工程</td><td><input type="checkbox" aria-label="显示土方工程"></td><td><input type="checkbox" aria-label="土方工程名称"></td></tr>
          <tr class="l2"><td>基础工程</td><td><input type="checkbox" aria-label="显示基础工程"></td><td><input type="checkbox" aria-label="基础工程名称"></td></tr>
          <tr class="l2"><td>主体结构</td><td><input type="checkbox" aria-label="显示主体结构"></td><td><input type="checkbox" aria-label="主体结构名称"></td></tr>
          <tr class="l2"><td>二次结构</td><td><input type="checkbox" aria-label="显示二次结构"></td><td><input type="checkbox" aria-label="二次结构名称"></td></tr>
          <tr class="l2"><td>装饰装修</td><td><input type="checkbox" aria-label="显示装饰装修"></td><td><input type="checkbox" aria-label="装饰装修名称"></td></tr>
          <tr class="l2"><td>其它土建</td><td><input type="checkbox" checked aria-label="显示其它土建"></td><td><input type="checkbox" aria-label="其它土建名称"></td></tr>
          <tr class="l2 last"><td>钢筋工程</td><td><input type="checkbox" checked aria-label="显示钢筋工程"></td><td><input type="checkbox" aria-label="钢筋工程名称"></td></tr>
          <tr class="l1"><td><button class="tog">−</button>轴线</td><td><input type="checkbox" checked aria-label="显示轴线"></td><td><input type="checkbox" disabled aria-label="轴线名称"></td></tr>
          <tr class="l2"><td>轴网</td><td><input type="checkbox" checked aria-label="显示轴网"></td><td><input type="checkbox" disabled aria-label="轴网名称"></td></tr>
          <tr class="l2 last"><td>辅助轴线</td><td><input type="checkbox" checked aria-label="显示辅助轴线"></td><td><input type="checkbox" disabled aria-label="辅助轴线名称"></td></tr>
          <tr class="l1"><td><button class="tog">−</button>柱</td><td><input type="checkbox" checked aria-label="显示柱类"></td><td><input type="checkbox" aria-label="柱类名称"></td></tr>
          <tr class="l2"><td>柱</td><td><input type="checkbox" checked aria-label="显示柱"></td><td><input type="checkbox" aria-label="柱名称"></td></tr>
          <tr class="l2"><td>构造柱</td><td><input type="checkbox" checked aria-label="显示构造柱"></td><td><input type="checkbox" aria-label="构造柱名称"></td></tr>
          <tr class="l2"><td>砌体柱</td><td><input type="checkbox" checked aria-label="显示砌体柱"></td><td><input type="checkbox" aria-label="砌体柱名称"></td></tr>
          <tr class="l2 last"><td>约束边缘非阴...</td><td><input type="checkbox" checked aria-label="显示约束边缘非阴影区"></td><td><input type="checkbox" aria-label="约束边缘非阴影区名称"></td></tr>
          <tr class="l1"><td><button class="tog">−</button>墙</td><td><input type="checkbox" class="part" aria-label="显示墙"></td><td><input type="checkbox" aria-label="墙名称"></td></tr>
          <tr class="l2"><td>剪力墙</td><td><input type="checkbox" checked aria-label="显示剪力墙"></td><td><input type="checkbox" aria-label="剪力墙名称"></td></tr>
          <tr class="l2"><td>人防门框墙</td><td><input type="checkbox" checked aria-label="显示人防门框墙"></td><td><input type="checkbox" aria-label="人防门框墙名称"></td></tr>
          <tr class="l2"><td>砌体墙</td><td><input type="checkbox" checked aria-label="显示砌体墙"></td><td><input type="checkbox" aria-label="砌体墙名称"></td></tr>
          <tr class="l2"><td>砌体加筋</td><td><input type="checkbox" aria-label="显示砌体加筋"></td><td><input type="checkbox" aria-label="砌体加筋名称"></td></tr>
          <tr class="l2"><td>保温墙</td><td><input type="checkbox" checked aria-label="显示保温墙"></td><td><input type="checkbox" aria-label="保温墙名称"></td></tr>
          <tr class="l2"><td>暗梁</td><td><input type="checkbox" aria-label="显示暗梁"></td><td><input type="checkbox" aria-label="暗梁名称"></td></tr>
        </tbody>
      </table>
      <div class="track"><div class="thumb"></div></div>
    </div>
    <div class="dfoot"><button>恢复默认设置</button></div>
  </aside>
</main>

<footer class="status">
  <dl><div class="s1"><dt>层高:</dt><dd>3.46</dd></div><div class="s2"><dt>标高:</dt><dd>-0.58~2.88</dd></div><div class="s3"><dt>选中图元:</dt><dd>0</dd></div><div class="s4"><dt>隐藏图元:</dt><dd>0</dd></div></dl>
  <div class="snaps">
    <button aria-label="正交"><svg><use href="#s-ortho"/></svg></button>
    <button class="wide on" aria-label="矩形捕捉"><svg><use href="#s-rect"/></svg><svg class="ar"><use href="#arrow"/></svg></button>
    <button class="off" aria-label="交点捕捉"><svg><use href="#s-x"/></svg></button>
    <button class="wide" aria-label="角度"><svg><use href="#s-angle"/></svg><svg class="ar"><use href="#arrow"/></svg></button>
    <button class="wide" aria-label="动态输入"><svg><use href="#s-plus"/></svg><svg class="ar"><use href="#arrow"/></svg></button>
    <button aria-label="图层捕捉"><svg><use href="#s-copy"/></svg></button>
    <button aria-label="弧线捕捉"><svg><use href="#s-arc"/></svg></button>
  </div>
  <p><svg><use href="#s-expand"/></svg>按鼠标左键指定第一个角点，或拾取构件图元</p>
</footer>
<div class="desk"></div>
</body>
</html>
```

FILE: styles.css
```css
* { box-sizing: border-box; }
html, body { height: 100%; }
body {
  margin: 0;
  display: flex;
  flex-direction: column;
  font: 16px/20px "Noto Sans CJK SC", "Noto Sans", sans-serif;
  color: #3c3c3e;
  background: #fdfdfe;
  overflow: hidden;
}
button, input, select { font: inherit; color: inherit; }
button { border: 0; padding: 0; background: none; display: flex; align-items: center; white-space: nowrap; }
h2, p, ul, dl, dd { margin: 0; padding: 0; }
ul { list-style: none; }
.sprite { position: absolute; width: 0; height: 0; }

.g, .gb, .b, .r, .d, .g2, .b2 { fill: none; stroke-width: 1.5; }
.g, .g2 { stroke: #5e6370; }
.gb { stroke: #4a6a90; }
.b, .b2 { stroke: #3a80d8; }
.r { stroke: #e04848; }
.d { stroke: #b4b4b8; }
.g2, .b2 { stroke-width: 3; }
.lf { fill: #cfe3fb; }
.lf2 { fill: #a9c9f2; stroke-width: 2; }
.wf { fill: #fff; }
.bf { fill: #2f7bdc; }
.gf { fill: #555a68; }
.af { fill: #77777b; }
.ic { width: 22px; height: 22px; flex: none; }
.sm { width: 18px; height: 18px; flex: none; }
.xs { width: 14px; height: 14px; flex: none; }
.ar { width: 8px; height: 5px; flex: none; }

/* title and tabs */
.top { display: flex; height: 52px; flex: none; border-bottom: 1px solid #ededf0; }
.logo { width: 60px; flex: none; }
.logo svg { width: 60px; height: 52px; }
.top-rows { flex: 1; min-width: 0; }
.titlebar, .tabbar { display: flex; align-items: center; justify-content: space-between; height: 26px; }
.titlebar { padding-bottom: 2px; }
.qat { display: flex; gap: 12px; padding-left: 10px; flex: none; height: 24px; }
.split { width: 34px; gap: 3px; }
.title { position: relative; flex: 1; padding-left: 2px; line-height: 24px; white-space: nowrap; }
.badge { position: absolute; left: 223px; top: 10px; padding: 0 2px; background: #d22b2f; color: #fff; font-size: 14px; line-height: 15px; }
.wins { display: flex; gap: 32px; padding: 0 17px; }
.tabs { display: flex; gap: 1px; padding-left: 4px; }
.tabs a { padding: 0 16px 1px; line-height: 25px; border-radius: 13px; color: inherit; text-decoration: none; }
.tabs .on { background: #1e88f5; color: #fff; }
.help { display: flex; align-items: center; gap: 9px; padding-right: 7px; }
.ask { display: flex; align-items: center; width: 416px; height: 22px; border: 2px solid #4a94dc; border-radius: 2px; padding-left: 2px; margin-right: 2px; }
.ask input { flex: 1; min-width: 0; border: 0; padding: 0; font-size: 15px; line-height: 18px; height: 18px; color: #222; background: none; }
.ask .sm { opacity: .5; }
.q { font-size: 20px; width: 20px; gap: 2px; }

/* ribbon */
.ribbon { display: flex; height: 128px; flex: none; padding-top: 3px; border-bottom: 1px solid #dcdcdf; }
.group { display: flex; flex-direction: column; height: 119px; border-right: 1px solid #e2e2e6; flex: none; }
.cells { display: grid; grid-template-rows: repeat(3, 30px); align-items: center; }
.cells button { gap: 4px; }
.cells button:disabled { color: #bcbcc0; }
.cells button:disabled svg { opacity: .4; }
.cells .ar { margin-left: 2px; }
.group p { display: flex; align-items: center; justify-content: center; gap: 8px; padding-top: 6px; line-height: 22px; }
.group p .ar { width: 10px; height: 6px; }
.cells .big { grid-row: 1 / 4; flex-direction: column; align-self: start; justify-self: center; gap: 2px; padding-top: 2px; height: 90px; }
.big svg { width: 42px; height: 46px; }
.cells .big .ar { width: 8px; height: 5px; margin: 8px 0 0; }
.cells .big.on { background: #c3d8f3; border-radius: 3px; width: 52px; height: 88px; margin-top: 4px; padding-top: 0; }
.g1 { width: 302px; } .g1 .cells { grid-template-columns: 67px 128px auto; }
.g1 .big { grid-column: 1; margin-left: 4px; }
.g1 p { padding-left: 6px; }
.g2 { width: 253px; } .g2 .cells { grid-template-columns: 103px auto; padding-left: 9px; }
.g3 { width: 358px; } .g3 .cells { grid-template-columns: 87px 144px auto; padding-left: 9px; }
.g4 { width: 308px; } .g4 .cells { grid-template-columns: 70px 71px 82px auto; padding-left: 10px; }
.g5 { width: 87px; } .g5 .cells { grid-template-columns: 42px auto; padding-left: 10px; }
.g6 { width: 273px; } .g6 .cells { grid-template-columns: 92px 92px 1fr; padding: 0 10px 0 7px; }
.g7 { width: 185px; } .g7 .cells { grid-template-columns: 79px auto; }
.g8 { width: 117px; } .g8 .cells { padding-left: 10px; }

/* selectors */
.pickers { display: flex; gap: 5px; height: 35px; padding: 3px 3px 4px; background: #f0f0f1; flex: none; }
.pickers label { position: relative; width: 128px; }
.pickers select { appearance: none; width: 100%; height: 28px; border: 0; border-radius: 4px; background: #fff; padding: 0 4px 2px; }
.pickers label::after { content: ""; position: absolute; right: 7px; top: 12px; border: 4px solid transparent; border-top: 5px solid #666; border-bottom: 0; }

/* main area */
main { display: flex; flex: 1; min-height: 0; }
.panel { display: flex; flex-direction: column; border: 1px solid #d9d9de; border-top: 0; min-height: 0; }
.strip { display: flex; justify-content: flex-end; align-items: center; height: 16px; padding-right: 2px; background: #e6e6e8; border-bottom: 1px solid #dadadd; flex: none; }
.strip svg { width: 14px; height: 12px; opacity: .6; }
.panel h2 { font-size: 16px; font-weight: 400; line-height: 25px; padding: 0 0 2px 10px; color: #77777a; background: #f1f1f2; border-bottom: 1px solid #e0e0e3; flex: none; }
.track { flex: none; }
.thumb { background: #c9c9cd; border-radius: 5px; }

.nav { width: 169px; margin-right: 6px; border-left: 0; flex: none; }
.navtools { display: flex; gap: 6px; height: 36px; align-items: center; padding-left: 2px; border-bottom: 1px solid #dedee2; flex: none; }
.navtools button { width: 30px; height: 28px; border-radius: 3px; justify-content: center; }
.navtools .on { background: #c3d8f3; }
.navtools svg { height: 20px; }
.navscroll { display: flex; flex: 1; min-height: 0; padding: 5px 0 4px; }
.navlist { display: flex; flex-direction: column; gap: 4px; width: 150px; }
.navlist button { flex: 1; gap: 17px; padding: 0 0 2px 21px; min-height: 0; }
.navlist svg { width: 26px; height: 26px; }
.navlist .cat { background: #eeeef0; padding-left: 4px; }
.navlist .on { background: #d3e6fd; }
.nav .track { padding: 128px 4px 42px; width: 18px; display: flex; }
.nav .thumb { width: 10px; }

.mid { width: 421px; display: flex; flex-direction: column; gap: 6px; flex: none; }
.comps { height: 269px; flex: none; }
.layers { flex: 1; }
.ptabs { display: flex; height: 28px; background: #f1f1f2; border-bottom: 1px solid #dcdce0; flex: none; }
.ptabs button { width: 85px; justify-content: center; color: #8a8a8d; background: #e0e0e1; border-right: 1px solid #d2d2d6; }
.ptabs .on { color: #333; background: #f4f4f5; }
.ptabs .bold { font-weight: 700; }
.ptools { display: flex; align-items: center; gap: 14px; height: 36px; padding-left: 5px; flex: none; }
.ptools button { gap: 4px; }
.ptools .ar { margin-left: 3px; }
.ptools .more { margin-left: auto; padding: 0 3px; height: 28px; border: 1px solid #eeeef0; border-radius: 4px; }
.more svg { width: 10px; height: 7px; }
.psearch { display: flex; align-items: center; height: 26px; border: solid #e2e2e6; border-width: 1px 0; padding: 0 8px 0 2px; flex: none; }
.psearch input { flex: 1; border: 0; padding: 0; height: 22px; background: none; }
.psearch input::placeholder { color: #9a9a9d; }
.psearch svg { opacity: .6; }
.tree { padding: 6px 0 0 17px; line-height: 27px; }
.tree .ar { margin-right: 5px; vertical-align: 4px; }
.tree li li { height: 27px; margin: 4px 0; padding-left: 35px; }
.tree span { display: inline-block; width: 100px; padding-left: 4px; border-radius: 3px; }
.tree .on { background: #c3d8f3; }

table { border-collapse: collapse; }
th { font-weight: 400; }
.ltable { width: 100%; }
.ltable th, .ltable td { height: 27px; padding: 0; border: 1px solid #dedee2; text-align: center; }
.ltable th:nth-child(1) { width: 66px; }
.ltable th:nth-child(2) { width: 47px; }
.ltable td:nth-child(3) { text-align: left; padding-left: 6px; }
.ltable input, .dtable input { vertical-align: middle; }
.tri { display: inline-block; border: 4px solid transparent; border-left: 5px solid #777; border-right: 0; }

input[type=checkbox] { appearance: none; position: relative; width: 18px; height: 18px; margin: 0; border: 1px solid #929296; border-radius: 3px; background: #fff; }
input[type=checkbox]:checked { background: #2f7bd9; border-color: #2f7bd9; }
input[type=checkbox]:checked::after { content: ""; position: absolute; left: 5px; top: 2px; width: 6px; height: 10px; border: solid #fff; border-width: 0 2px 2px 0; transform: rotate(40deg); }
input[type=checkbox]:disabled { background: #ececee; border-color: #b8b8bc; }
input.part::after { content: ""; position: absolute; inset: 1px; background: #8fc0f5; border: 1px solid #4a90de; }

.grip { width: 5px; flex: none; align-self: stretch; background: linear-gradient(#565d6a, #565d6a) 1px 343px / 4px 130px no-repeat; }

/* drawing canvas */
.canvas { position: relative; flex: 1; min-width: 0; background: #000; border-right: 1px solid #000; }
.plan { position: absolute; width: 100%; height: 100%; }
.plan path, .plan use { shape-rendering: crispEdges; }
.dimred { fill: none; stroke: #780008; }
.green { fill: none; stroke: #107a16; }
.green use { shape-rendering: auto; stroke-width: 1.5; }
.red { fill: none; stroke: #c80808; }
.core { fill: none; stroke: #d03020; opacity: .6; }
.wall path { fill: none; stroke-width: 5; }
.wall .w-purple { stroke: #a30cb0; }
.wall .w-tan { stroke: #a86468; }
.wall .w-grey { stroke: #8e8e90; }
.wall .w-orange { stroke: #e6a030; }
.wall .w-yellow { stroke: #f2e03a; stroke-width: 3; }
.wall .w-dark { stroke: #4c0690; }
.wall .w-violet { stroke: #6208a0; stroke-width: 6; }
.wall .thin { stroke-width: 3; }
.wall .w-navy { stroke: #080884; }
.wall .w-olive { stroke: #7f7420; stroke-width: 7; }
.ax text, .dm text, .ucs text { text-anchor: middle; font-size: 23px; fill: #f4f4f4; }
.ucs text:nth-of-type(1) { fill: #0f0; font-size: 20px; }
.ucs text:nth-of-type(2) { fill: #f00; font-size: 20px; }
.plan .mark { fill: none; stroke: #fff; stroke-width: 2; shape-rendering: auto; }
.viewbar { position: absolute; right: 0; top: 0; width: 41px; padding: 16px 0 14px; background: #fdfdfe; display: flex; flex-direction: column; align-items: center; gap: 9px; }
.viewbar button { flex-direction: column; gap: 9px; }
.viewbar svg { width: 28px; height: 28px; }
.viewbar .ar { width: 10px; height: 6px; }
.viewbar hr { width: 30px; margin: 0; border: 0; border-top: 2px solid #66666c; }

/* display settings */
.display { width: 364px; margin-left: 1px; flex: none; border-right: 0; }
.dtabs { display: flex; align-items: flex-end; gap: 5px; height: 34px; padding-left: 3px; border-bottom: 1px solid #d8d8dc; flex: none; }
.dtabs button { height: 27px; width: 78px; justify-content: center; background: #dededf; border-radius: 3px 3px 0 0; }
.dtabs .on { height: 30px; width: 79px; margin-bottom: -1px; color: #2f7bdc; background: #fff; border: 1px solid #d8d8dc; border-bottom: 0; }
.dbody { display: flex; flex: 1; min-height: 0; margin: 4px 3px 0 4px; border: 1px solid #d8d8dc; }
.dtable { flex: 1; display: grid; grid-template-rows: 27px 1fr; }
.dtable tbody { display: grid; grid-auto-rows: minmax(0, 1fr); }
.dtable tr { display: grid; grid-template-columns: 1fr 82px 82px; }
.dtable thead tr { height: 27px; }
.dtable th, .dtable td { display: flex; align-items: center; justify-content: center; padding: 0; border: solid #dedee2; border-width: 0 1px 1px 0; }
.dtable td:first-child { justify-content: flex-start; }
.dtable tr:last-child td { border-bottom: 0; }
.l0 td:first-child { padding-left: 2px; }
.l1 td:first-child { padding-left: 15px; background: linear-gradient(#e0e0e4, #e0e0e4) 10px 0 / 1px 100% no-repeat; }
.l2 td:first-child { padding-left: 52px; background: linear-gradient(#e0e0e4, #e0e0e4) 10px 0 / 1px 100% no-repeat, linear-gradient(#e0e0e4, #e0e0e4) 23px 0 / 1px 100% no-repeat, linear-gradient(#e0e0e4, #e0e0e4) 23px 50% / 21px 1px no-repeat; }
.last.l2 td:first-child { background-size: 1px 100%, 1px 50%, 21px 1px; }
.tog { width: 17px; height: 17px; margin-right: 7px; justify-content: center; border: 1px solid #8e8e92; border-radius: 2px; background: #fff; line-height: 14px; flex: none; }
.display .track { width: 19px; padding: 19px 4px 0; }
.display .thumb { width: 10px; height: 112px; }
.dfoot { display: flex; justify-content: flex-end; padding: 8px 12px 9px; flex: none; }
.dfoot button { width: 116px; height: 33px; justify-content: center; border: 1px solid #d4d4d8; border-radius: 4px; background: #fff; }

/* status bar */
.status { display: flex; align-items: center; height: 42px; padding-bottom: 3px; flex: none; background: #fcfcfe; border-top: 1px solid #e4e4e8; }
.status dl { display: flex; width: 587px; padding-left: 2px; flex: none; }
.status dl div { display: flex; gap: 16px; white-space: nowrap; }
.s1 { width: 117px; } .s2 { width: 182px; } .s3 { width: 142px; }
.status dl .s3, .status dl .s4 { gap: 8px; }
.snaps { display: flex; gap: 6px; }
.snaps button { width: 32px; height: 32px; justify-content: center; gap: 4px; border: 1px solid #8e8e96; border-radius: 3px; }
.snaps .wide { width: 46px; }
.snaps .on { background: #cfe2fa; border-color: #5a9ae6; }
.snaps .off { opacity: .6; }
.snaps svg { width: 22px; height: 22px; }
.snaps .ar { width: 8px; height: 5px; }
.status p { display: flex; align-items: center; gap: 4px; padding-left: 20px; white-space: nowrap; }
.status p svg { width: 22px; height: 22px; }
.desk { height: 9px; flex: none; background: linear-gradient(90deg, #22363f 0, #1f3040 69.3%, #e6eaf2 69.3%); }
```
